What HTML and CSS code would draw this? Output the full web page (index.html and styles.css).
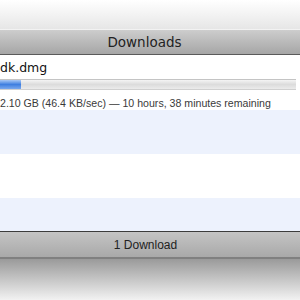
FILE: index.html
```html
<!DOCTYPE html>
<html>
<head>
<meta charset="utf-8">
<link rel="stylesheet" href="styles.css">
</head>
<body>
<div class="window">
  <div class="top"></div>
  <div class="titlebar">Downloads</div>
  <div class="list">
    <div class="row item">
      <div class="name">dk.dmg</div>
      <div class="progress"><div class="fill" style="width:21px"></div></div>
      <div class="status">2.10 GB (46.4 KB/sec) — 10 hours, 38 minutes remaining</div>
    </div>
    <div class="row alt"></div>
    <div class="row"></div>
    <div class="row alt last"></div>
  </div>
  <div class="statusbar">1 Download</div>
  <div class="bottom"></div>
</div>
</body>
</html>
```
FILE: styles.css
```css
html, body {
  margin: 0;
  padding: 0;
  width: 300px;
  height: 300px;
  overflow: hidden;
  background: #fff;
  font-family: "DejaVu Sans", "Liberation Sans", sans-serif;
}
.window {
  display: flex;
  flex-direction: column;
  height: 300px;
}
.top {
  height: 29px;
  background: linear-gradient(#ffffff, #e6e6e6);
}
.titlebar {
  height: 24px;
  padding-right: 11px;
  border-top: 1px solid #f2f2f2;
  border-bottom: 1px solid #5a5a5a;
  background: linear-gradient(#cdcdcd, #a6a6a6);
  font-size: 13.5px;
  color: #222;
  display: flex;
  align-items: center;
  justify-content: center;
}
.list {
  display: flex;
  flex-direction: column;
}
.row {
  height: 44px;
  background: #fff;
}
.alt {
  background: #edf2fd;
}
.item {
  height: 55px;
  display: flex;
  flex-direction: column;
}
.last {
  height: 33px;
}
.name {
  font-size: 12.5px;
  color: #111;
  margin-top: 5px;
  line-height: 16px;
}
.progress {
  margin-top: 3px;
  margin-right: 4px;
  height: 9px;
  background: linear-gradient(#f4f4f4, #dcdcdc 50%, #ebebeb);
  border-top: 1px solid #c4c4c4;
  border-bottom: 1px solid #d0d0d0;
}
.fill {
  height: 100%;
  background: linear-gradient(#a8c8f5, #3f7fe0 50%, #79a8ee);
}
.status {
  margin-top: 7px;
  font-family: "Liberation Sans", Arial, sans-serif;
  font-size: 10.6px;
  color: #3a3a3a;
  line-height: 13px;
  white-space: nowrap;
}
.statusbar {
  height: 25px;
  padding-right: 9px;
  border-top: 1px solid #3c3c3c;
  border-bottom: 2px solid #808080;
  background: linear-gradient(#c4c4c4, #a9a9a9);
  font-family: "Liberation Sans", Arial, sans-serif;
  font-size: 12px;
  color: #222;
  display: flex;
  align-items: center;
  justify-content: center;
}
.bottom {
  flex: 1;
  background: linear-gradient(#9a9a9a, #f2f2f2);
}
```
